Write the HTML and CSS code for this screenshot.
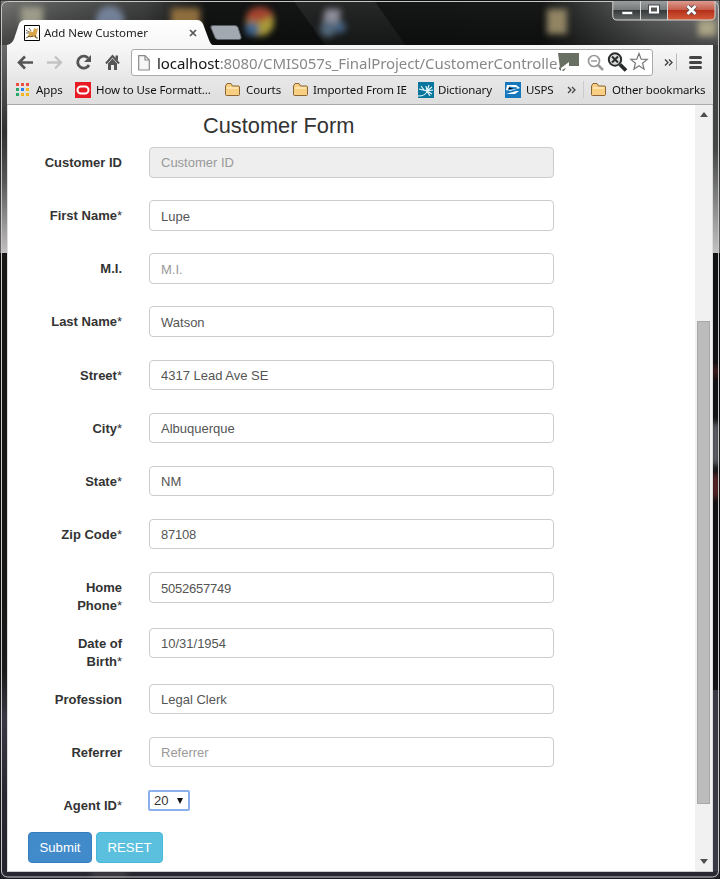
FILE: index.html
```html
<!DOCTYPE html>
<html lang="en">
<head>
<meta charset="utf-8">
<title>Add New Customer</title>
<link rel="stylesheet" href="styles.css">
</head>
<body>
<div class="window">
  <svg class="glass" width="720" height="879" viewBox="0 0 720 879" aria-hidden="true">
    <defs>
      <linearGradient id="top"><stop offset="0" stop-color="#777875"/><stop offset=".08" stop-color="#595b5a"/><stop offset=".2" stop-color="#414342"/><stop offset=".29" stop-color="#141615"/><stop offset=".75" stop-color="#171918"/><stop offset=".9" stop-color="#676868"/><stop offset="1" stop-color="#858685"/></linearGradient>
      <linearGradient id="shade" x1="0" y1="0" x2="0" y2="1"><stop offset="0" stop-color="#000" stop-opacity="0"/><stop offset="1" stop-color="#000" stop-opacity=".45"/></linearGradient>
      <linearGradient id="left" x1="0" y1="0" x2="0" y2="1"><stop offset="0" stop-color="#686968"/><stop offset=".42" stop-color="#303030"/><stop offset=".65" stop-color="#555"/><stop offset="1" stop-color="#c2c0c0"/></linearGradient>
      <linearGradient id="right" x1="0" y1="0" x2="0" y2="1"><stop offset="0" stop-color="#3d3e3e"/><stop offset=".5" stop-color="#454646"/><stop offset="1" stop-color="#c2c2c2"/></linearGradient>
      <linearGradient id="low" x1="0" y1="0" x2="0" y2="1"><stop offset="0" stop-color="#171615"/><stop offset=".35" stop-color="#191919"/><stop offset=".5" stop-color="#393844"/><stop offset=".75" stop-color="#292832"/><stop offset="1" stop-color="#25242c"/></linearGradient>
      <filter id="soft" x="-50%" y="-50%" width="200%" height="200%"><feGaussianBlur stdDeviation="3"/></filter>
    </defs>
    <rect width="720" height="879" fill="#111214"/>
    <rect width="720" height="46" fill="url(#top)"/>
    <path d="M293 0h81l32 46h-80z" fill="#303232" opacity=".65"/>
    <rect width="720" height="46" fill="url(#shade)"/>
    <rect y="45" width="8" height="208" fill="url(#left)"/>
    <rect x="712" y="45" width="8" height="208" fill="url(#right)"/>
    <rect y="253" width="8" height="620" fill="#171615"/>
    <rect y="560" width="8" height="315" fill="url(#low)"/>
    <rect x="712" y="690" width="8" height="185" fill="#393845"/>
    <rect y="871" width="720" height="8" fill="#292832"/>
    <g filter="url(#soft)">
      <rect x="21" y="7" width="22" height="22" fill="#c2bea5" opacity=".65"/>
      <circle cx="110" cy="20" r="14" fill="#899bbd" opacity=".7"/>
      <rect x="171" y="8" width="29" height="23" fill="#9b7740" opacity=".9"/>
      <circle cx="260" cy="22" r="14" fill="#a89937"/><path d="M246 20q0-12 14-13 9 0 14 8l-14 7z" fill="#a54533"/><circle cx="252" cy="29" r="7" fill="#40658c"/>
      <path d="M325 9h16l-2 18h-17z" fill="#8c8d99"/><circle cx="328" cy="29" r="8" fill="#52677c"/><circle cx="340" cy="27" r="6" fill="#43617f"/>
      <path d="M547 9h20v25h-20z" fill="#918464"/>
      <path d="M698 20h18v16h-18z" fill="#aaa486"/>
      <path d="M713 423h5v42h-5z" fill="#9395a0"/><path d="M713 474h5v24h-5z" fill="#872e35"/><path d="M713 366h5v10h-5z" fill="#652326"/>
      <path d="M91 872h36v5H91z" fill="#4b494c"/>
    </g>
    <rect x="1.5" y="1.5" width="717" height="875.5" rx="6" fill="none" stroke="#c7c7c5"/>
    <path d="M0 0h720v879H0z" fill="none" stroke="#080808"/>
  </svg>

  <header class="tabstrip">
    <div class="tab">
      <svg class="tab-shape" width="206" height="26" viewBox="0 0 206 26"><defs><linearGradient id="tabfill" x1="0" y1="0" x2="0" y2="1"><stop stop-color="#fff"/><stop offset="1" stop-color="#f6f6f6"/></linearGradient></defs><path d="M0 25Q5 24 7 19L12 4Q14 0 18 0H190Q194 0 196 4L202 20Q204 25 206 25V26H0Z" fill="url(#tabfill)"/></svg>
      <svg class="favicon" width="16" height="16" viewBox="0 0 16 16"><path d="M.5.5h15v15H.5z" fill="#fff" stroke="#000"/><path d="M3 12l2-3 0-3 4 1 1-4 2 1 2-1-1 5-1 2 1 3-3-1-4 0z" fill="#d8a64d"/><path d="M2 13l4-2M6 12l3-1M11 10l1 3 2 0M2 5l3 2M2 8l3 0M5 3l2 3" stroke="#4c4429" stroke-width=".8" fill="none"/></svg>
      <span class="tab-title">Add New Customer</span>
      <svg class="tab-close" width="8" height="8" viewBox="0 0 8 8"><path d="M1 1l6 6M7 1L1 7" stroke="#555" stroke-width="1.7"/></svg>
    </div>
    <svg class="new-tab" width="32" height="15" viewBox="0 0 32 15"><path d="M3 .5h22q2 0 3 2l3 9q1 3-2 3H8q-2 0-3-2L1 3Q0 .5 3 .5" fill="#a2a9b0" stroke="#555c62"/></svg>
    <svg class="controls" width="104" height="20" viewBox="0 0 104 20">
      <defs><linearGradient id="grey" x1="0" y1="0" x2="0" y2="1"><stop stop-color="#9b9e9e"/><stop offset=".46" stop-color="#777a7a"/><stop offset=".48" stop-color="#343737"/><stop offset="1" stop-color="#666969"/></linearGradient><linearGradient id="red" x1="0" y1="0" x2="0" y2="1"><stop stop-color="#dc9b8f"/><stop offset=".46" stop-color="#c75d4c"/><stop offset=".48" stop-color="#b52e18"/><stop offset="1" stop-color="#d25d3a"/></linearGradient></defs>
      <path d="M1 0H56V19H5Q1 19 1 15Z" fill="url(#grey)"/><path d="M56 0H103V15Q103 19 99 19H56Z" fill="url(#red)"/>
      <path d="M.8 0V15Q.8 19 5 19H98Q103 19 103 15V0M28.5 0V19M55.5 0V19" fill="none" stroke="#d6d6d6" stroke-width="1"/>
      <path d="M10 10.500h10.500v3h-10.500z" fill="#fff" stroke="#50545a" stroke-width=".7"/>
      <path d="M38 5.500h8v6h-8z" fill="none" stroke="#444952" stroke-width="4"/><path d="M38 5.500h8v6h-8z" fill="#555" stroke="#fff" stroke-width="2"/>
      <path d="M75.500 5l8 8m0-8l-8 8" stroke="#5b4b50" stroke-width="4.500"/><path d="M75.500 5l8 8m0-8l-8 8" stroke="#fff" stroke-width="2.600"/>
    </svg>
  </header>

  <nav class="toolbar">
    <svg class="nav-icons" width="124" height="31" viewBox="0 0 124 31">
      <path d="M26 17.500H13M18 11.500l-6 6 6 6" fill="none" stroke="#555" stroke-width="2.600"/>
      <path d="M40 17.500h13M48 11.500l6 6-6 6" fill="none" stroke="#c3c3c3" stroke-width="2.300"/>
      <path d="M81 13A6 6 0 1 0 82 20" fill="none" stroke="#555" stroke-width="2.800"/><path d="M84 10v7h-7z" fill="#555"/>
      <path d="M99 18.500l6.500-7.500 6.500 7.500" fill="none" stroke="#555" stroke-width="2"/><path d="M101 18.500l4.500-5 4.500 5v6.500h-3v-5h-3v5h-3zM108.500 10.500h2.500v5l-2.500-2z" fill="#555"/>
    </svg>
    <div class="address">
      <svg class="page-icon" width="12" height="16" viewBox="0 0 12 16"><path d="M.7.700H7l4.300 4.300v10H.7zM7 .700V5h4.300" fill="#f7f7f7" stroke="#8a8a8a" stroke-width="1.200"/></svg>
      <span class="url"><b>localhost</b>:8080/CMIS057s_FinalProject/CustomerControlle</span>
      <svg class="address-icons" width="93" height="24" viewBox="0 0 93 24">
        <path d="M0 3h21v13H9l-3 5-3-1-1-2z" fill="#687064"/><path d="M0 17l3 1 8-6v4l-7 4-1 2H0z" fill="#fff"/><path d="M1 17l2 1v3l-2-2z" fill="#687064"/>
        <circle cx="36" cy="11" r="5.500" fill="none" stroke="#999" stroke-width="1.700"/><path d="M33 11h6" stroke="#999" stroke-width="1.500"/><path d="M40 15l5 5" stroke="#999" stroke-width="2.500"/>
        <circle cx="57" cy="9.500" r="6.200" fill="#ddd" stroke="#292c2c" stroke-width="2"/><path d="M54 6.500l6 6m0-6l-6 6" stroke="#292c2c" stroke-width="2"/><path d="M62 14.500l6 6" stroke="#292c2c" stroke-width="3.800"/>
        <path d="M81 3.500l2.200 5.700 6 .2-4.700 3.800 1.600 6-5.100-3.400-5.100 3.400 1.600-6-4.700-3.800 6-.2z" fill="#fff" stroke="#777" stroke-width="1.200"/>
      </svg>
    </div>
    <svg class="menu-icons" width="55" height="31" viewBox="0 0 55 31"><path d="M7 14.500l3 3-3 3M11 14.500l3 3-3 3" fill="none" stroke="#444" stroke-width="1.400"/><path d="M18.500 8.500v17" stroke="#bbb"/><path d="M32.500 12.500h10M32.500 17.500h10M32.500 22.500h10" stroke="#444" stroke-width="3" stroke-linecap="round"/></svg>
  </nav>

  <nav class="bookmarks">
    <svg class="bookmark-art" width="705" height="28" viewBox="0 0 705 28" aria-hidden="true">
      <defs><g id="folder"><path d="M.5 3L2 .500h4L7.500 3h6q1 0 1 1v7.500q0 1-1 1h-12q-1 0-1-1z" fill="#f8ce83" stroke="#8c6534"/><path d="M2 5h11" stroke="#ffe3ac" stroke-width="2"/></g></defs>
      <g><path d="M8 7h3v3H8z" fill="#ed4d43"/><path d="M13 7h3v3h-3z" fill="#ed4d43"/><path d="M18 7h3v3h-3z" fill="#ed4d43"/><path d="M8 12h3v3H8z" fill="#28a667"/><path d="M13 12h3v3h-3z" fill="#2981ef"/><path d="M18 12h3v3h-3z" fill="#f5b51d"/><path d="M8 17h3v3H8z" fill="#28a667"/><path d="M13 17h3v3h-3z" fill="#f5b51d"/><path d="M18 17h3v3h-3z" fill="#f5b51d"/></g>
      <path d="M67 6h16v16H67z" fill="#e81b25"/><rect x="69.500" y="10.500" width="11" height="7" rx="3.500" fill="none" stroke="#fff" stroke-width="2"/>
      <use href="#folder" x="217" y="7"/><use href="#folder" x="285" y="7"/>
      <path d="M410 6h16v16h-16z" fill="#08759d"/><path d="M410 20q8 0 9-5l-8-2m5 1l-3-4m6 5l-1-5m1 5l2-6m-2 6l5-4m-5 4l6-1m-6 1l5 3m-5-3l3 5" fill="none" stroke="#e5f7fd" stroke-width="1.200"/>
      <path d="M497 6h16v16h-16z" fill="#1578bd"/><path d="M499 9h9l4 3-10 3-4-1zM498 18l10-3 3 0-4 3zM498 20l8-1" fill="#fff"/><path d="M501 11l8 1-9 2" stroke="#1987cc" stroke-width="1"/>
      <path d="M560 11l3 3-3 3M564 11l3 3-3 3" fill="none" stroke="#444" stroke-width="1.300"/><path d="M575.500 5v17" stroke="#ccc"/><use href="#folder" x="583" y="7"/>
    </svg>
    <span class="b-apps">Apps</span><span class="b-howto">How to Use Formatt...</span><span class="b-courts">Courts</span><span class="b-imported">Imported From IE</span><span class="b-dictionary">Dictionary</span><span class="b-usps">USPS</span><span class="b-other">Other bookmarks</span>
  </nav>

  <main class="viewport">
    <form class="form">
      <h1>Customer Form</h1>
      <div class="row"><label>Customer ID</label><input placeholder="Customer ID" disabled></div>
      <div class="row"><label>First Name<i>*</i></label><input value="Lupe"></div>
      <div class="row"><label>M.I.</label><input placeholder="M.I."></div>
      <div class="row long"><label>Last Name<i>*</i></label><input value="Watson"></div>
      <div class="row short"><label>Street<i>*</i></label><input value="4317 Lead Ave SE"></div>
      <div class="row short"><label>City<i>*</i></label><input value="Albuquerque"></div>
      <div class="row short"><label>State<i>*</i></label><input value="NM"></div>
      <div class="row short"><label>Zip Code<i>*</i></label><input class="digits" value="87108"></div>
      <div class="row double"><label>Home<br>Phone<i>*</i></label><input class="digits" value="5052657749"></div>
      <div class="row double short"><label>Date of<br>Birth<i>*</i></label><input value="10/31/1954"></div>
      <div class="row short"><label>Profession</label><input value="Legal Clerk"></div>
      <div class="row short"><label>Referrer</label><input placeholder="Referrer"></div>
      <div class="row agent"><label>Agent ID<i>*</i></label><button type="button" class="select">20<svg width="6" height="6" viewBox="0 0 6 6"><path d="M0 0h6L3 6z" fill="#111"/></svg></button></div>
      <div class="buttons"><button type="button" class="submit">Submit</button><button type="button" class="reset">RESET</button></div>
    </form>
    <div class="scrollbar">
      <svg width="8" height="5" viewBox="0 0 8 5"><path d="M0 5l4-5 4 5z" fill="#505050"/></svg>
      <div class="thumb"></div>
      <svg width="8" height="5" viewBox="0 0 8 5"><path d="M0 0l4 5 4-5z" fill="#505050"/></svg>
    </div>
  </main>
</div>
</body>
</html>
```
FILE: styles.css
```css
* { box-sizing: border-box; }
body { margin: 0; width: 720px; height: 879px; overflow: hidden; font: 13px/18px "Liberation Sans", Arial, sans-serif; color: #333; }
.window { position: relative; height: 879px; padding: 0 7px; isolation: isolate; }
.glass { position: absolute; left: 0; top: 0; z-index: -1; }
svg { display: block; flex: none; }
.tabstrip { height: 45px; display: flex; align-items: flex-start; }
.tab { position: relative; width: 206px; height: 25px; margin-top: 20px; padding: 5px 14px 0 17px; display: flex; isolation: isolate; }
.tab-shape { position: absolute; left: 0; top: 0; z-index: -1; }
.tab-title { width: 106px; margin-left: 4px; font: 11.5px/16px "Noto Sans", sans-serif; color: #222; white-space: nowrap; letter-spacing: -.04px; }
.tab-close { margin: 4px 0 0 39px; }
.new-tab { margin: 25px 0 0 -3px; }
.controls { margin: 1px -3px 0 auto; }
.toolbar { width: 706px; height: 31px; display: flex; background: linear-gradient(#f7f7f7, #e9e9e9); }
.address { width: 522px; height: 27px; margin-top: 4px; padding-left: 6px; border: 1px solid #aaa; border-radius: 3px; background: #fff; display: flex; align-items: center; position: relative; }
.url { margin-left: 7px; font: 15px/24px "Noto Sans", sans-serif; color: #888; white-space: nowrap; letter-spacing: -.08px; }
.url b { font-weight: 400; color: #151515; }
.address-icons { position: absolute; left: 426px; top: 0; }
.menu-icons { margin-left: auto; }
.bookmarks { position: relative; width: 706px; height: 29px; display: flex; align-items: center; background: linear-gradient(#e8e8e8, #dedede); border-bottom: 1px solid #aaa; font: 11.5px/18px "Noto Sans", sans-serif; letter-spacing: -.12px; color: #111; white-space: nowrap; isolation: isolate; }
.bookmark-art { position: absolute; left: 1px; top: 0; z-index: -1; }
.bookmarks span { flex: none; }
.b-apps { width: 60px; margin-left: 29px; }
.b-howto { width: 150px; }
.b-courts { width: 67px; }
.b-imported { width: 125px; }
.b-dictionary { width: 88px; }
.b-usps { width: 86px; }
.b-other { width: 100px; }
.viewport { width: 706px; height: 767px; display: flex; justify-content: space-between; background: #fff; border-left: 1px solid #ddd; border-right: 1px solid #ddd; border-bottom: 1px solid #ccc; }
.form { width: 546px; padding-left: 20px; }
h1 { margin: 0; padding: 9px 0 0 175px; height: 42px; font-size: 21.8px; line-height: 24px; font-weight: 400; }
.row { height: 53px; display: grid; grid-template-columns: 94px 405px; column-gap: 27px; align-items: start; }
.row.long { height: 54px; }
.row.double { height: 56px; }
.row.agent { height: 42px; }
label { padding-top: 7px; font-weight: 700; text-align: right; }
label i { font-style: normal; font-weight: 400; }
input { width: 405px; height: 31px; padding: 1px 11px 0; border: 1px solid #ccc; border-radius: 4px; color: #555; background: #fff; font: 13px/18px "Liberation Sans", Arial, sans-serif; outline: 0; }
.short input { height: 30px; }
input.digits { letter-spacing: -.23px; }
input:disabled { background: #eee; padding-top: 0; }
input::placeholder { color: #999; opacity: 1; }
.select { width: 42px; height: 21px; margin-left: -1px; padding: 0 5px 0 4px; display: flex; align-items: center; justify-content: space-between; border: 2px solid #8bb0ec; border-radius: 2px; background: #fff; color: #333; font: 13px/16px "Liberation Sans", Arial, sans-serif; }
.buttons { display: flex; gap: 4px; }
.buttons button { height: 31px; padding: 1px 0 0; border: 1px solid; border-radius: 4px; color: #fff; font: 13.2px/18px "Liberation Sans", Arial, sans-serif; }
.buttons .submit { width: 64px; background: #428bca; border-color: #357ebd; }
.buttons .reset { width: 67px; background: #5bc0de; border-color: #46b8da; }
.scrollbar { width: 17px; padding: 7px 0; display: flex; flex-direction: column; align-items: center; justify-content: space-between; background: #f1f1f1; }
.thumb { width: 13px; height: 483px; margin-top: 149px; background: #bcbcbc; border: 1px solid #a8a8a8; }
```
